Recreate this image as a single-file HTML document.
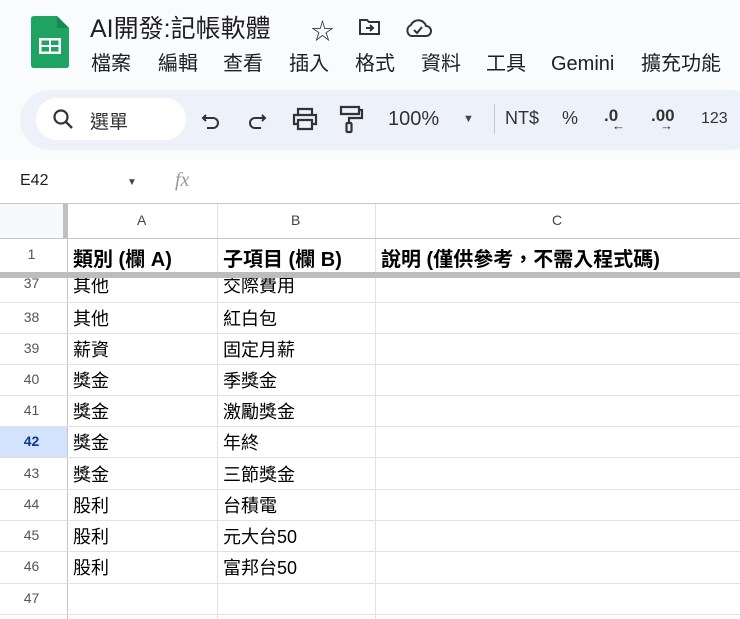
<!DOCTYPE html>
<html><head><meta charset="utf-8"><style>
*{margin:0;padding:0;box-sizing:border-box}
body{width:740px;height:619px;overflow:hidden;background:#fff;font-family:"Liberation Sans","Noto Sans CJK TC",sans-serif;position:relative;color:#1f1f1f}
.a{position:absolute;white-space:nowrap}
.top{position:absolute;left:0;top:0;width:740px;height:160px;background:#f9fbfd}
.menu span{position:absolute;top:0;line-height:26px;height:26px}
.tb{position:absolute;left:20px;top:90px;width:740px;height:60px;background:#edf2fa;border-radius:30px}
.search{position:absolute;left:36px;top:98px;width:150px;height:42px;background:#fff;border-radius:21px}
.ico{position:absolute}
.hl{position:absolute;background:#e1e1e1;height:1px;left:0;width:740px}
.vl{position:absolute;background:#e1e1e1;width:1px}
.rn{position:absolute;left:0;width:63px;text-align:center;font-size:14px;color:#555}
.c{position:absolute;font-size:18px;color:#000}
</style></head><body>
<div class="top"></div>
<svg class="ico" style="left:31px;top:16px" width="38" height="52" viewBox="0 0 38 52"><path d="M3 0H26L38 12V49Q38 52 35 52H3Q0 52 0 49V3Q0 0 3 0Z" fill="#1ea362"/><path d="M26 0V12H38Z" fill="#168a51"/><rect x="8" y="22" width="22" height="16" fill="#fff"/><rect x="10.5" y="24.5" width="7.5" height="4.5" fill="#1ea362"/><rect x="20" y="24.5" width="7.5" height="4.5" fill="#1ea362"/><rect x="10.5" y="31" width="7.5" height="4.5" fill="#1ea362"/><rect x="20" y="31" width="7.5" height="4.5" fill="#1ea362"/></svg>
<div class="a" style="left:90px;top:9px;font-size:25px;color:#1f1f1f">AI開發:記帳軟體</div>
<div class="a" style="left:311px;top:12px;font-size:23px;color:#333">☆</div>
<svg class="ico" style="left:358px;top:17px" width="24" height="20" viewBox="0 0 24 20"><path d="M2 3H9L11 5H21V17H2Z" fill="none" stroke="#333" stroke-width="2"/><path d="M8 11H15M12 8L15 11L12 14" fill="none" stroke="#333" stroke-width="2"/></svg>
<svg class="ico" style="left:403px;top:17px" width="30" height="22" viewBox="0 0 30 22"><path d="M8 19H23A5 5 0 0 0 23 9A8 8 0 0 0 8 8A6 6 0 0 0 8 19Z" fill="none" stroke="#333" stroke-width="2"/><path d="M11 13L14 16L19 10" fill="none" stroke="#333" stroke-width="2"/></svg>
<div class="a menu" style="left:91px;top:51px;font-size:20px;color:#1f1f1f;height:26px">
<span style="left:0">檔案</span><span style="left:67px">編輯</span><span style="left:132px">查看</span><span style="left:198px">插入</span><span style="left:264px">格式</span><span style="left:330px">資料</span><span style="left:395px">工具</span><span style="left:460px">Gemini</span><span style="left:550px">擴充功能</span></div>
<div class="tb"></div>
<div class="search"></div>
<svg class="ico" style="left:52px;top:108px" width="22" height="22" viewBox="0 0 22 22"><circle cx="9" cy="9" r="6.5" fill="none" stroke="#333" stroke-width="2.2"/><path d="M14 14L20 20" stroke="#333" stroke-width="2.4"/></svg>
<div class="a" style="left:90px;top:107px;font-size:19px;color:#333">選單</div>
<svg class="ico" style="left:200px;top:110px" width="22" height="20" viewBox="0 0 22 20"><path d="M6 5L3 8L6 11M3 8H13A5 5 0 0 1 13 18H7" fill="none" stroke="#333" stroke-width="2"/></svg>
<svg class="ico" style="left:246px;top:110px" width="22" height="20" viewBox="0 0 22 20"><path d="M16 5L19 8L16 11M19 8H9A5 5 0 0 0 9 18H15" fill="none" stroke="#333" stroke-width="2"/></svg>
<svg class="ico" style="left:291px;top:106px" width="28" height="26" viewBox="0 0 28 26"><path d="M7 8V3H21V8M7 18H3V9H25V18H21M7 14H21V23H7Z" fill="none" stroke="#333" stroke-width="2.2"/></svg>
<svg class="ico" style="left:338px;top:104px" width="26" height="30" viewBox="0 0 26 30"><path d="M3 3H21V10H3ZM21 6H24V14H11V19" fill="none" stroke="#333" stroke-width="2.2"/><rect x="8.5" y="19" width="5" height="9" rx="1" fill="none" stroke="#333" stroke-width="2.2"/></svg>
<div class="a" style="left:388px;top:108px;font-size:20px;color:#333">100%</div>
<div class="a" style="left:463px;top:113px;font-size:11px;color:#444">▼</div>
<div class="a" style="left:494px;top:104px;width:1px;height:30px;background:#c7c7c7"></div>
<div class="a" style="left:505px;top:108px;font-size:18px;color:#333">NT$</div>
<div class="a" style="left:562px;top:108px;font-size:18px;color:#333">%</div>
<div class="a" style="left:604px;top:106px;font-size:17px;color:#333;font-weight:bold">.0</div>
<div class="a" style="left:612px;top:118px;font-size:13px;color:#333">←</div>
<div class="a" style="left:651px;top:106px;font-size:17px;color:#333;font-weight:bold">.00</div>
<div class="a" style="left:660px;top:118px;font-size:13px;color:#333">→</div>
<div class="a" style="left:701px;top:110px;font-size:16px;color:#333">123</div>
<div class="a" style="left:20px;top:172px;font-size:16px;color:#1f1f1f">E42</div>
<div class="a" style="left:127px;top:177px;font-size:10px;color:#444">▼</div>
<div class="a" style="left:175px;top:169px;font-size:20px;color:#999;font-family:'Liberation Serif',serif;font-style:italic">fx</div>
<div class="a" style="left:0;top:203px;width:740px;height:1px;background:#c7c7c7"></div>
<div class="a" style="left:0;top:204px;width:63px;height:34px;background:#f8f9fa"></div>
<div class="a" style="left:0;top:426px;width:67px;height:31px;background:#d3e3fd"></div>
<div class="a" style="left:63px;top:204px;width:5px;height:34px;background:#c0c0c0"></div>
<div class="vl" style="left:67px;top:238px;height:381px;background:#c7c7c7"></div>
<div class="vl" style="left:217px;top:204px;height:415px"></div>
<div class="vl" style="left:375px;top:204px;height:415px"></div>
<div class="hl" style="top:238px;background:#c7c7c7"></div>
<div class="a" style="left:0;top:272px;width:740px;height:6px;background:#bdbdbd"></div>
<div class="hl" style="top:302px"></div><div class="hl" style="top:333px"></div><div class="hl" style="top:364px"></div><div class="hl" style="top:395px"></div><div class="hl" style="top:426px"></div><div class="hl" style="top:457px"></div><div class="hl" style="top:489px"></div><div class="hl" style="top:520px"></div><div class="hl" style="top:551px"></div><div class="hl" style="top:583px"></div><div class="hl" style="top:614px"></div>
<div class="a" style="left:137px;top:212px;font-size:14px;color:#444">A</div>
<div class="a" style="left:291px;top:212px;font-size:14px;color:#444">B</div>
<div class="a" style="left:552px;top:212px;font-size:14px;color:#444">C</div>
<div class="rn" style="top:246px">1</div>
<div class="c" style="left:73px;top:243px;font-size:20px;font-weight:bold">類別 (欄 A)</div>
<div class="c" style="left:223px;top:243px;font-size:20px;font-weight:bold">子項目 (欄 B)</div>
<div class="c" style="left:381px;top:243px;font-size:20px;font-weight:bold">說明 (僅供參考，不需入程式碼)</div>
<div style="position:absolute;left:0;top:278px;width:740px;height:24px;overflow:hidden">
<div class="rn" style="top:-3px">37</div><div class="c" style="left:73px;top:-6px">其他</div><div class="c" style="left:223px;top:-6px">交際費用</div></div>
<div class="rn" style="top:309px">38</div><div class="c" style="left:73px;top:305px">其他</div><div class="c" style="left:223px;top:305px">紅白包</div>
<div class="rn" style="top:340px">39</div><div class="c" style="left:73px;top:336px">薪資</div><div class="c" style="left:223px;top:336px">固定月薪</div>
<div class="rn" style="top:371px">40</div><div class="c" style="left:73px;top:367px">獎金</div><div class="c" style="left:223px;top:367px">季獎金</div>
<div class="rn" style="top:402px">41</div><div class="c" style="left:73px;top:398px">獎金</div><div class="c" style="left:223px;top:398px">激勵獎金</div>
<div class="rn" style="top:433px;color:#0b3a8a;font-weight:bold">42</div><div class="c" style="left:73px;top:429px">獎金</div><div class="c" style="left:223px;top:429px">年終</div>
<div class="rn" style="top:465px">43</div><div class="c" style="left:73px;top:461px">獎金</div><div class="c" style="left:223px;top:461px">三節獎金</div>
<div class="rn" style="top:496px">44</div><div class="c" style="left:73px;top:492px">股利</div><div class="c" style="left:223px;top:492px">台積電</div>
<div class="rn" style="top:527px">45</div><div class="c" style="left:73px;top:523px">股利</div><div class="c" style="left:223px;top:523px">元大台50</div>
<div class="rn" style="top:558px">46</div><div class="c" style="left:73px;top:554px">股利</div><div class="c" style="left:223px;top:554px">富邦台50</div>
<div class="rn" style="top:590px">47</div>
</body></html>
